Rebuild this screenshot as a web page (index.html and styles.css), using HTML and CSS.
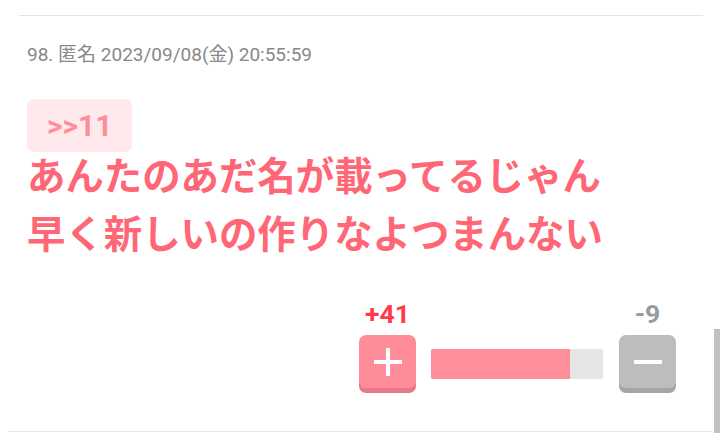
FILE: index.html
```html
<!DOCTYPE html>
<html lang="ja">
<head>
  <meta charset="UTF-8">
  <meta name="viewport" content="width=device-width, initial-scale=1.0">
  <title>98. 匿名</title>
  <link rel="stylesheet" href="styles.css">
</head>
<body>
  <div class="thread">
    <article class="post">
      <div class="post-meta">98. 匿名 2023/09/08(金) 20:55:59</div>
      <div class="post-anchor"><a class="anchor" href="#res-11">&gt;&gt;11</a></div>
      <p class="post-body">あんたのあだ名が載ってるじゃん<br>早く新しいの作りなよつまんない</p>

      <div class="votes">
        <div class="vote">
          <span class="vote-count good">+41</span>
          <button class="vote-btn good" type="button" aria-label="プラス">
            <svg width="28" height="28" viewBox="0 0 28 28"><path d="M14 0V28M0 14H28" stroke="#fff" stroke-width="4"/></svg>
          </button>
        </div>
        <div class="vote-bar">
          <div class="vote-bar-fill" style="width: 81%"></div>
        </div>
        <div class="vote">
          <span class="vote-count bad">-9</span>
          <button class="vote-btn bad" type="button" aria-label="マイナス">
            <svg width="28" height="28" viewBox="0 0 28 28"><path d="M0 14H28" stroke="#fff" stroke-width="4"/></svg>
          </button>
        </div>
      </div>
    </article>
    <div class="divider"></div>
  </div>
  <div class="scrollbar"></div>
</body>
</html>
```

FILE: styles.css
```css
body {
  margin: 0;
  font-family: Roboto, "Noto Sans CJK JP", sans-serif;
  background-color: #fff;
  overflow: hidden;
}

.thread {
  padding-top: 15px;
}

.post {
  margin: 0 17px 0 19px;
  padding: 27px 0 43px 8px;
  border-top: 1px solid #e3e3e3;
}

.post-meta {
  font-size: 19px;
  line-height: 24px;
  color: #888;
}

.post-anchor {
  margin-top: 32px;
}

.anchor {
  display: inline-block;
  height: 53px;
  padding: 0 20px;
  line-height: 53px;
  font-size: 30px;
  font-weight: bold;
  color: #ff8e9a;
  text-decoration: none;
  background-color: #ffe9ec;
  border-radius: 7px;
}

.post-body {
  margin: -4px 0 0;
  font-size: 38.4px;
  line-height: 58px;
  font-weight: bold;
  color: #ff6676;
}

.votes {
  display: flex;
  justify-content: flex-end;
  align-items: flex-end;
  margin-top: 35px;
  padding-right: 27px;
}

.vote {
  display: flex;
  flex-direction: column;
  align-items: center;
  gap: 6px;
}

.vote-count {
  font-size: 26.5px;
  line-height: 30px;
  font-weight: bold;
}

.vote-count.good {
  color: #ff3a4d;
}

.vote-count.bad {
  color: #9a9a9a;
}

.vote-btn {
  display: flex;
  align-items: center;
  justify-content: center;
  width: 57px;
  height: 53px;
  padding: 0;
  border: none;
  border-radius: 7px;
  cursor: pointer;
}

.vote-btn.good {
  background-color: #ff8d99;
  box-shadow: 0 5px 0 #e67985;
}

.vote-btn.bad {
  background-color: #bdbdbd;
  box-shadow: 0 5px 0 #a5a5a5;
}

.vote-bar {
  width: 172px;
  height: 30px;
  margin: 0 16px 9px 15px;
  background-color: #e5e5e5;
  border-radius: 2px;
  overflow: hidden;
}

.vote-bar-fill {
  height: 100%;
  background-color: #ff8e9a;
}

.divider {
  margin: 0 7px 0 8px;
  border-top: 1px solid #e8e8e8;
}

.scrollbar {
  position: absolute;
  top: 329px;
  right: 0;
  width: 6px;
  height: 104px;
  background-color: #c1c1c1;
}
```
